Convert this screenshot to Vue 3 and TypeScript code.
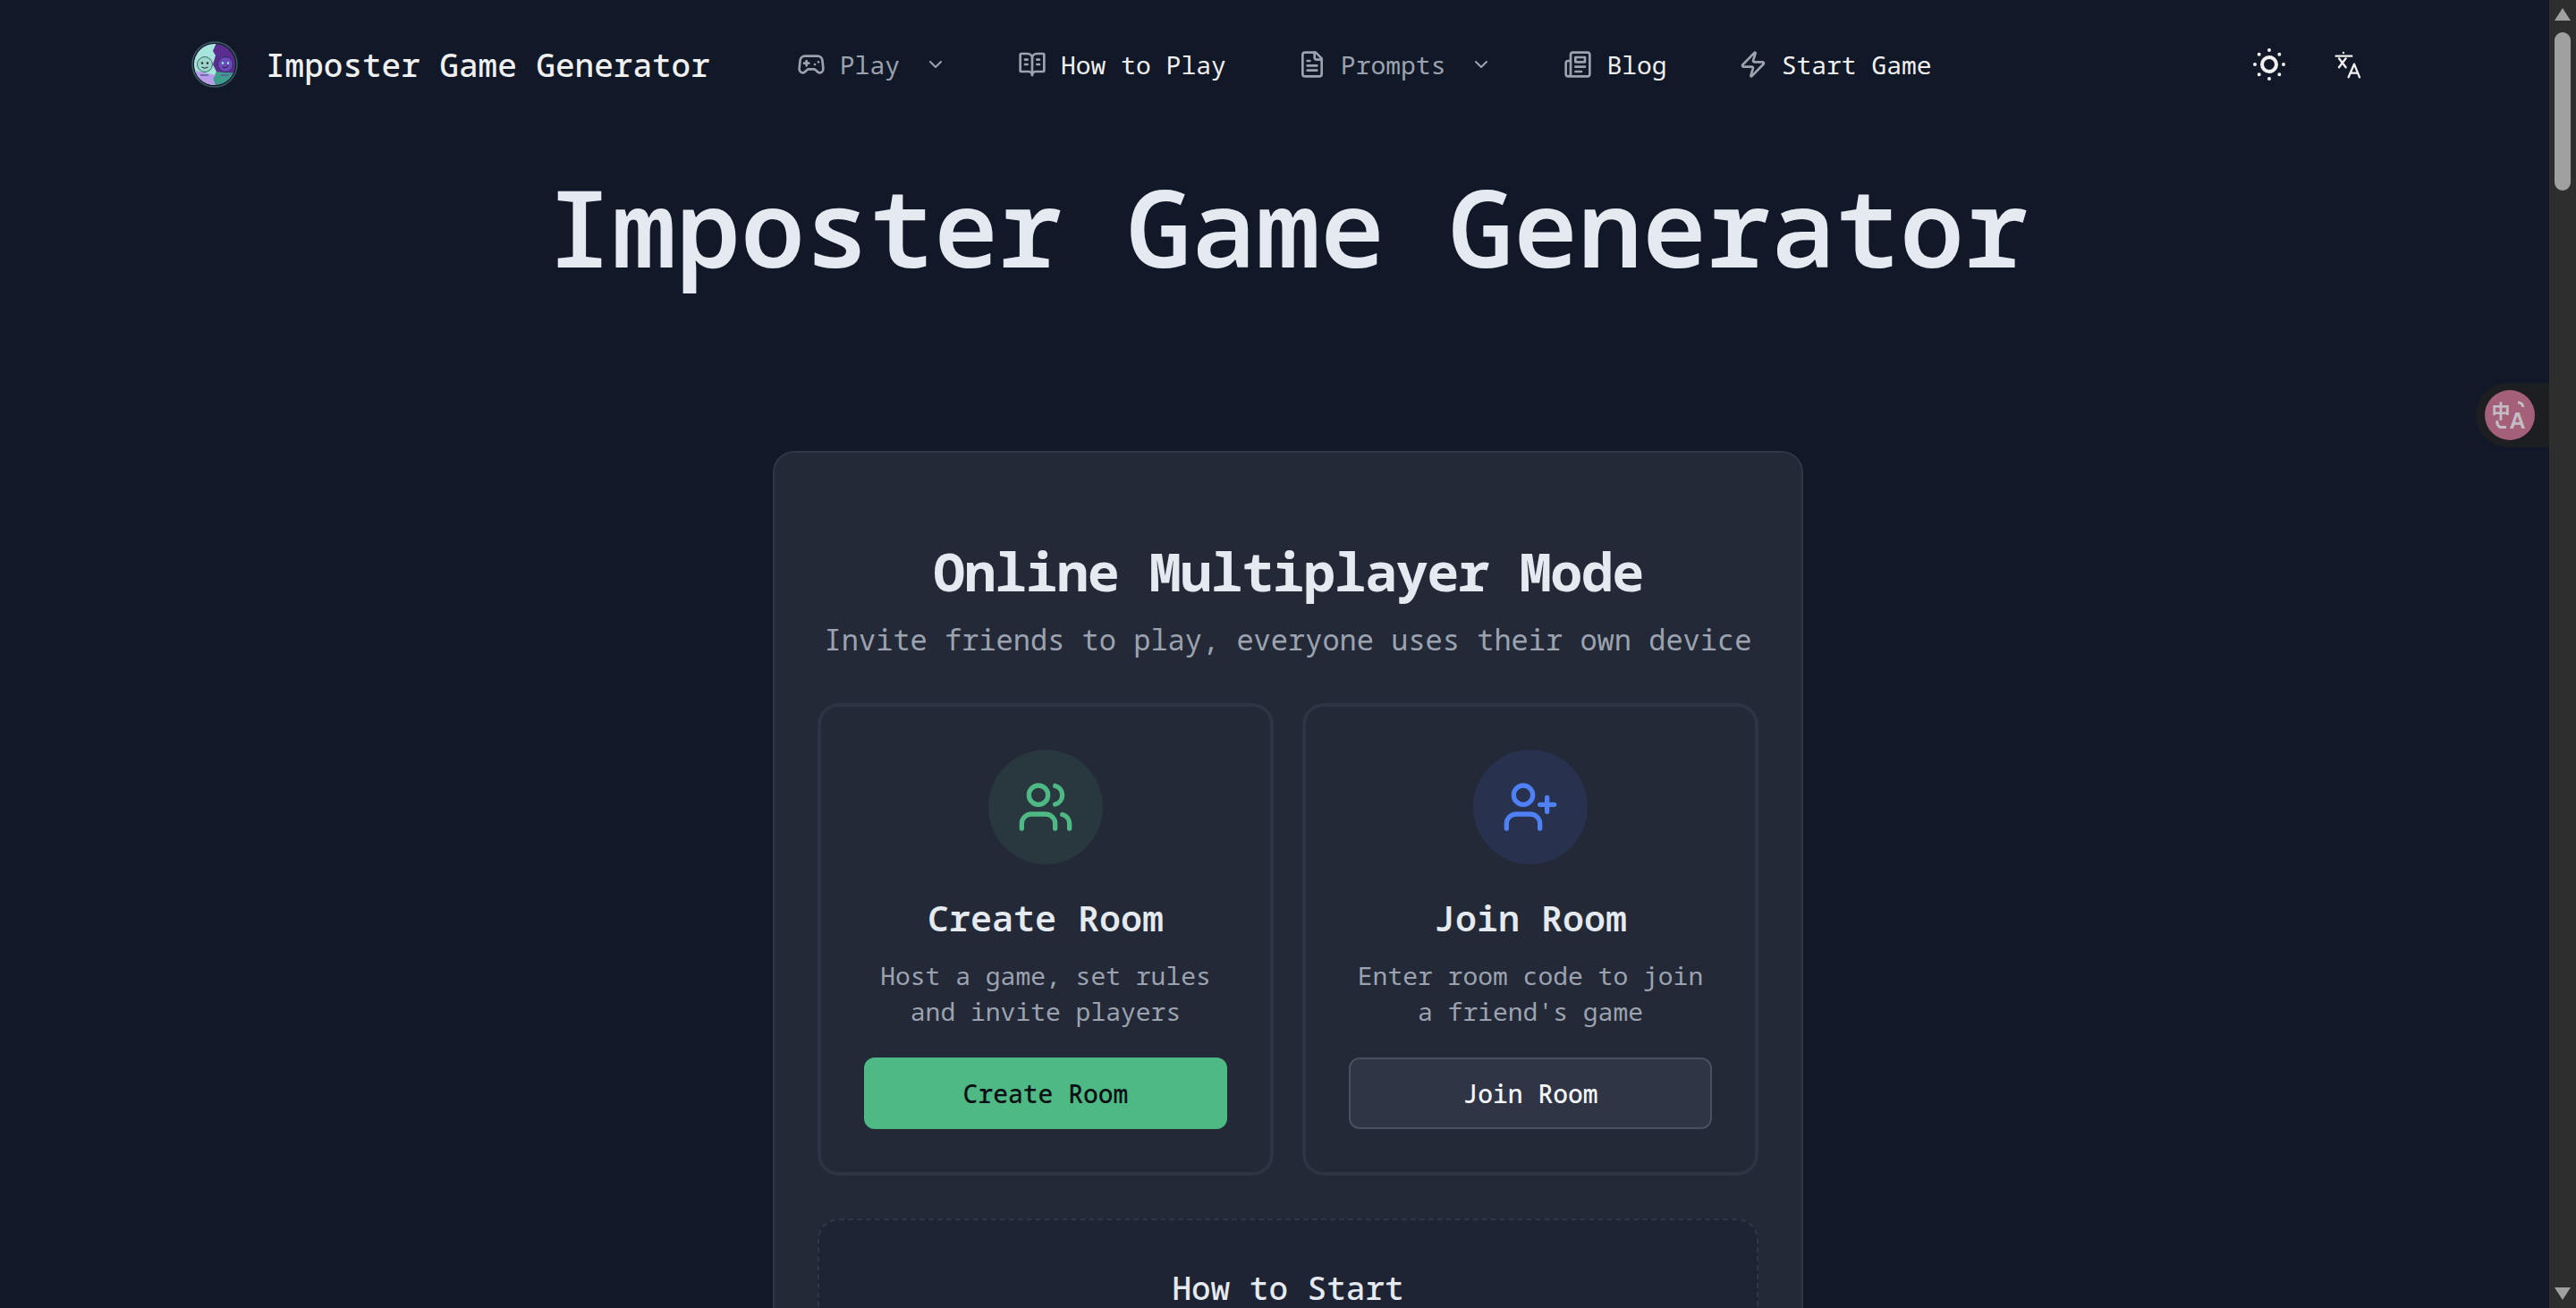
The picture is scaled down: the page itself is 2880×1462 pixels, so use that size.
<script setup lang="ts">
const rooms = [
  { title: 'Create Room', lines: ['Host a game, set rules', 'and invite players'], kind: 'create' },
  { title: 'Join Room', lines: ['Enter room code to join', "a friend's game"], kind: 'join' },
]
</script>

<template>
  <div class="page">
    <nav class="nav">
      <a class="brand">
        <svg class="logo" viewBox="0 0 52 52">
          <defs>
            <clipPath id="logo-disc"><circle cx="26" cy="26" r="23" /></clipPath>
          </defs>
          <circle cx="26" cy="26" r="25" fill="#141c2a" stroke="#3f5a66" stroke-width="1.5" />
          <g clip-path="url(#logo-disc)">
            <rect x="0" y="0" width="52" height="52" fill="#5a2d8e" />
            <path d="M0 32 L52 36 V52 H0 Z" fill="#3f9c8c" />
            <path d="M28 2 L24 11 L27 16 L24 26 L28 34 L24 42 L27 50 H0 V0 H28 Z" fill="#a6e6dc" />
            <path d="M0 32 L27 38 L24 42 L27 50 H0 Z" fill="#b89ce8" />
          </g>
          <circle cx="15" cy="26" r="8.5" fill="#9bd6c8" stroke="#3c6a70" />
          <circle cx="38" cy="26" r="8.5" fill="#6c4bb8" stroke="#2d2a60" />
          <circle cx="12" cy="24.5" r="1.2" fill="#223" />
          <circle cx="18" cy="24.5" r="1.2" fill="#223" />
          <circle cx="35" cy="24.5" r="1.2" fill="#9fe" />
          <circle cx="41" cy="24.5" r="1.2" fill="#9fe" />
          <path d="M11.5 29 q3.5 2.5 7 0 M34.5 29 q3.5 2 7 -1.5" fill="none" stroke="#223" stroke-width="1" />
          <path d="M10 38h9M33 38h9" stroke="#5d5a9a" stroke-width="1.5" />
        </svg>
        <span class="brand-text">Imposter Game Generator</span>
      </a>
      <div class="links">
        <a class="link muted">
          <svg class="ico" viewBox="0 0 24 24"><path d="M6 11h4M8 9v4M15 12h.01M18 10h.01" /><path d="M17.32 5H6.68a4 4 0 0 0-3.978 3.59c-.006.052-.01.101-.017.152C2.604 9.416 2 14.456 2 16a3 3 0 0 0 3 3c1 0 1.5-.5 2-1l1.414-1.414A2 2 0 0 1 9.828 16h4.344a2 2 0 0 1 1.414.586L17 18c.5.5 1 1 2 1a3 3 0 0 0 3-3c0-1.545-.604-6.584-.685-7.258-.007-.05-.011-.1-.017-.151A4 4 0 0 0 17.32 5z" /></svg>
          <span>Play</span>
          <svg class="chev" viewBox="0 0 24 24"><path d="m6 9 6 6 6-6" /></svg>
        </a>
        <a class="link">
          <svg class="ico" viewBox="0 0 24 24"><path d="M12 7v14M16 12h2M16 8h2M6 12h2M6 8h2" /><path d="M3 18a1 1 0 0 1-1-1V4a1 1 0 0 1 1-1h5a4 4 0 0 1 4 4 4 4 0 0 1 4-4h5a1 1 0 0 1 1 1v13a1 1 0 0 1-1 1h-6a3 3 0 0 0-3 3 3 3 0 0 0-3-3z" /></svg>
          <span>How to Play</span>
        </a>
        <a class="link muted">
          <svg class="ico" viewBox="0 0 24 24"><path d="M15 2H6a2 2 0 0 0-2 2v16a2 2 0 0 0 2 2h12a2 2 0 0 0 2-2V7Z" /><path d="M14 2v4a2 2 0 0 0 2 2h4M10 9H8M16 13H8M16 17H8" /></svg>
          <span>Prompts</span>
          <svg class="chev" viewBox="0 0 24 24"><path d="m6 9 6 6 6-6" /></svg>
        </a>
        <a class="link">
          <svg class="ico" viewBox="0 0 24 24"><path d="M4 22h16a2 2 0 0 0 2-2V4a2 2 0 0 0-2-2H8a2 2 0 0 0-2 2v16a2 2 0 0 1-2 2Zm0 0a2 2 0 0 1-2-2v-9c0-1.1.9-2 2-2h2" /><path d="M18 14h-8M15 18h-5M10 6h8v4h-8V6Z" /></svg>
          <span>Blog</span>
        </a>
        <a class="link">
          <svg class="ico" viewBox="0 0 24 24"><path d="M4 14a1 1 0 0 1-.78-1.63l9.9-10.2a.5.5 0 0 1 .86.46l-1.92 6.02A1 1 0 0 0 13 10h7a1 1 0 0 1 .78 1.63l-9.9 10.2a.5.5 0 0 1-.86-.46l1.92-6.02A1 1 0 0 0 11 14z" /></svg>
          <span>Start Game</span>
        </a>
      </div>
      <div class="tools">
        <svg class="sun" viewBox="0 0 24 24"><circle cx="12" cy="12" r="4" /><path d="M12 4h.01M20 12h.01M12 20h.01M4 12h.01M17.657 6.343h.01M17.657 17.657h.01M6.343 17.657h.01M6.343 6.343h.01" /></svg>
        <svg class="lang" viewBox="0 0 90 90"><path d="M2 17h53M27 6h.01M12 25l23 30M35 25 12 55M44 88 63 44l18 44M50 74h25" /></svg>
      </div>
    </nav>

    <h1 class="title">Imposter Game Generator</h1>

    <section class="card">
      <h2 class="card-title">Online Multiplayer Mode</h2>
      <p class="card-sub">Invite friends to play, everyone uses their own device</p>
      <div class="rooms">
        <article v-for="r in rooms" :key="r.kind" class="room">
          <div class="badge" :class="r.kind">
            <svg v-if="r.kind === 'create'" viewBox="0 0 24 24"><path d="M16 21v-2a4 4 0 0 0-4-4H6a4 4 0 0 0-4 4v2" /><path d="M16 3.128a4 4 0 0 1 0 7.744" /><path d="M22 21v-2a4 4 0 0 0-3-3.870" /><circle cx="9" cy="7" r="4" /></svg>
            <svg v-else viewBox="0 0 24 24"><path d="M16 21v-2a4 4 0 0 0-4-4H6a4 4 0 0 0-4 4v2" /><circle cx="9" cy="7" r="4" /><path d="M19 8v6M22 11h-6" /></svg>
          </div>
          <h3 class="room-title">{{ r.title }}</h3>
          <p class="room-desc"><span v-for="l in r.lines" :key="l">{{ l }}</span></p>
          <button class="btn" :class="r.kind">{{ r.title }}</button>
        </article>
      </div>
      <div class="start">
        <h4 class="start-title">How to Start</h4>
      </div>
    </section>

    <aside class="widget">
      <div class="widget-dot">
        <svg viewBox="0 0 56 56">
          <text x="7.500" y="31" class="w-zh">中</text>
          <text x="27.500" y="43" class="w-a">A</text>
          <path d="M37 14h1a4.500 4.500 0 0 1 4.500 5M14 34a7 7 0 0 0 3 7.500h7" />
        </svg>
      </div>
    </aside>

    <div class="scrollbar">
      <i class="arrow up"></i>
      <i class="thumb"></i>
      <i class="arrow down"></i>
    </div>
  </div>
</template>

<style>
html, body { margin: 0; height: 100%; overflow: hidden; background: #111827; }
</style>

<style scoped>
.page {
  position: relative;
  width: 2880px;
  height: 1462px;
  overflow: hidden;
  background: #111827;
  color: #e5e7eb;
  font-family: "Noto Sans Mono", "DejaVu Sans Mono", monospace;
}
.nav {
  height: 144px;
  padding: 0 239px 0 214px;
  display: flex;
  align-items: center;
}
.brand { display: flex; align-items: center; gap: 31px; }
.logo { width: 52px; height: 52px; }
.brand-text { font-size: 36px; font-weight: 500; color: #f0f0f0; }
.links { display: flex; align-items: center; gap: 80px; margin-left: 97px; }
.link { display: flex; align-items: center; font-size: 28px; color: #f0f0f0; }
.link.muted { color: #9ca3af; }
.ico { width: 32px; height: 32px; margin-right: 16px; fill: none; stroke: #9ca3af; stroke-width: 2; stroke-linecap: round; stroke-linejoin: round; }
.chev { width: 24px; height: 24px; margin-left: 28px; fill: none; stroke: #9ca3af; stroke-width: 2; stroke-linecap: round; stroke-linejoin: round; }
.tools { margin-left: auto; display: flex; align-items: center; gap: 50px; }
.sun { width: 48px; height: 48px; fill: none; stroke: #f0f0f0; stroke-width: 2; stroke-linecap: round; stroke-linejoin: round; }
.lang { width: 30px; height: 30px; overflow: visible; fill: none; stroke: #f0f0f0; stroke-width: 7; stroke-linecap: round; stroke-linejoin: round; }

.title {
  margin: 49px 0 0;
  text-align: center;
  font-size: 120px;
  line-height: 120px;
  font-weight: 650;
  color: #e5e9f0;
}
.card {
  box-sizing: border-box;
  width: 1152px;
  margin: 191px auto 0;
  padding: 96px 48px 48px;
  background: #232937;
  border: 2px solid #2f3646;
  border-radius: 24px;
}
.card-title {
  margin: 0;
  text-align: center;
  font-size: 60px;
  line-height: 72px;
  letter-spacing: -1.5px;
  font-weight: 700;
  color: #e5e9f0;
}
.card-sub {
  margin: 17px 0 0;
  text-align: center;
  font-size: 32px;
  line-height: 48px;
  color: #9ca3af;
}
.rooms { display: grid; grid-template-columns: 1fr 1fr; gap: 32px; margin-top: 47px; }
.room {
  border: 4px solid #2e3443;
  border-radius: 24px;
  padding: 48px;
  display: flex;
  flex-direction: column;
  align-items: center;
}
.badge { width: 128px; height: 128px; border-radius: 50%; display: flex; align-items: center; justify-content: center; }
.badge svg { width: 64px; height: 64px; fill: none; stroke-width: 2; stroke-linecap: round; stroke-linejoin: round; }
.badge.create { background: #29373f; }
.badge.create svg { stroke: #4eb984; }
.badge.join { background: #28314d; }
.badge.join svg { stroke: #5080f5; }
.room-title { margin: 32px 0 0; font-size: 40px; line-height: 56px; font-weight: 600; color: #e5e9f0; }
.room-desc { margin: 16px 0 0; font-size: 28px; line-height: 40px; color: #9ca3af; text-align: center; display: flex; flex-direction: column; }
.btn {
  box-sizing: border-box;
  margin-top: 32px;
  width: 100%;
  height: 80px;
  border-radius: 12px;
  font-family: inherit;
  font-size: 28px;
  font-weight: 500;
  cursor: pointer;
}
.btn.create { background: #4eb984; border: 0; color: #0a0f14; }
.btn.join { background: #2f3545; border: 2px solid #4a5060; color: #f4f5f8; }
.start {
  margin-top: 48px;
  height: 300px;
  padding-top: 54px;
  box-sizing: border-box;
  background: #1e2433;
  border: 2px dashed #2f3646;
  border-radius: 24px;
}
.start-title { margin: 0; text-align: center; font-size: 36px; line-height: 44px; font-weight: 500; color: #e5e9f0; }

.widget {
  position: absolute;
  left: 2768px;
  top: 428px;
  width: 82px;
  height: 72px;
  box-sizing: border-box;
  padding: 8px 0 8px 10px;
  background: #1d1e22;
  border-radius: 36px 0 0 36px;
}
.widget-dot { width: 56px; height: 56px; border-radius: 50%; background: #a36078; }
.widget-dot svg { display: block; width: 56px; height: 56px; fill: none; stroke: #c4bcc4; stroke-width: 3; }
.w-zh { font-family: "Noto Sans CJK SC", sans-serif; font-size: 21px; fill: #c4bcc4; stroke: none; font-weight: 700; }
.w-a { font-family: "Liberation Sans", sans-serif; font-size: 25px; font-weight: 700; fill: #c4bcc4; stroke: none; }

.scrollbar {
  position: absolute;
  right: 0;
  top: 0;
  bottom: 0;
  width: 30px;
  background: #2e2e2e;
}
.thumb { position: absolute; left: 6px; top: 36px; width: 18px; height: 177px; border-radius: 9px; background: #a0a0a0; }
.arrow { position: absolute; left: 6px; width: 0; height: 0; border-left: 9px solid transparent; border-right: 9px solid transparent; }
.arrow.up { top: 9px; border-bottom: 14px solid #a0a0a0; }
.arrow.down { bottom: 9px; border-top: 14px solid #a0a0a0; }
</style>
